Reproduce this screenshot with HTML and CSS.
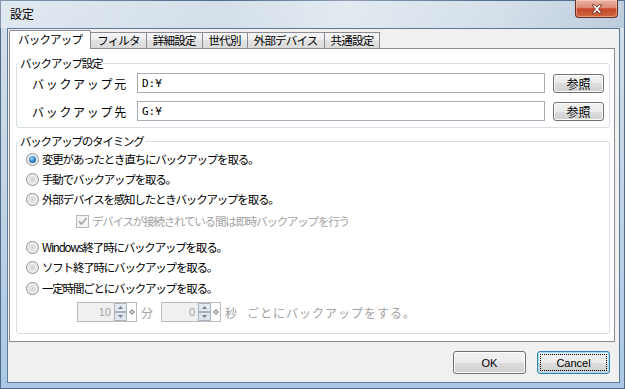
FILE: index.html
```html
<!DOCTYPE html>
<html lang="ja">

<head>
  <meta charset="UTF-8">
  <title>設定</title>
  <link rel="stylesheet" href="styles.css">
</head>

<body>
  <div class="window">
    <div class="titlebar">
      <span class="title">設定</span>
      <button class="close-btn" type="button">
        <svg width="14" height="10" viewBox="0 0 14 10">
          <path d="M2 0.8 L5.2 0.8 L7 3.2 L8.8 0.8 L12 0.8 L8.6 5 L12 9.2 L8.8 9.2 L7 6.8 L5.2 9.2 L2 9.2 L5.4 5 Z" fill="#fff" stroke="#5a1d12" stroke-width="0.8" />
        </svg>
      </button>
    </div>

    <div class="client">
      <div class="tabs">
        <div class="tab active">バックアップ</div>
        <div class="tab">フィルタ</div>
        <div class="tab">詳細設定</div>
        <div class="tab">世代別</div>
        <div class="tab">外部デバイス</div>
        <div class="tab">共通設定</div>
      </div>

      <div class="panel">
        <fieldset class="group">
          <legend>バックアップ設定</legend>
          <div class="path-rows">
            <div class="path-row">
              <label class="path-label">バックアップ元</label>
              <input class="path-input" type="text" value="D:¥">
              <button class="btn btn-browse" type="button">参照</button>
            </div>
            <div class="path-row">
              <label class="path-label">バックアップ先</label>
              <input class="path-input" type="text" value="G:¥">
              <button class="btn btn-browse" type="button">参照</button>
            </div>
          </div>
        </fieldset>

        <fieldset class="group group-timing">
          <legend>バックアップのタイミング</legend>
          <div class="options">
            <div class="option"><span class="radio checked"></span>変更があったとき直ちにバックアップを取る。</div>
            <div class="option"><span class="radio"></span>手動でバックアップを取る。</div>
            <div class="option"><span class="radio"></span>外部デバイスを感知したときバックアップを取る。</div>
            <div class="option option-sub">
              <span class="checkbox">
                <svg width="11" height="11" viewBox="0 0 11 11">
                  <path d="M2 5.5 L4.5 8 L9.5 2" fill="none" stroke="#a8a8a8" stroke-width="1.8" />
                </svg>
              </span>デバイスが接続されている間は即時バックアップを行う
            </div>
            <div class="option option-after-sub"><span class="radio"></span>Windows終了時にバックアップを取る。</div>
            <div class="option"><span class="radio"></span>ソフト終了時にバックアップを取る。</div>
            <div class="option option-tight"><span class="radio"></span>一定時間ごとにバックアップを取る。</div>
            <div class="spin-row">
              <div class="spin">
                <span class="spin-value">10</span>
                <span class="spin-arrows">
                  <svg width="13" height="18" viewBox="0 0 13 18">
                    <rect x="0.5" y="0.5" width="12" height="8" fill="#e4e9ee" stroke="#a9b3bd" />
                    <rect x="0.5" y="9.5" width="12" height="8" fill="#dfe5eb" stroke="#a9b3bd" />
                    <path d="M4 6 L6.5 3 L9 6 Z" fill="#6f8294" />
                    <path d="M4 12 L6.5 15 L9 12 Z" fill="#6f8294" />
                  </svg>
                </span>
                <span class="spin-mark"><i></i></span>
              </div>
              <span class="unit">分</span>
              <div class="spin spin-second">
                <span class="spin-value">0</span>
                <span class="spin-arrows">
                  <svg width="13" height="18" viewBox="0 0 13 18">
                    <rect x="0.5" y="0.5" width="12" height="8" fill="#e4e9ee" stroke="#a9b3bd" />
                    <rect x="0.5" y="9.5" width="12" height="8" fill="#dfe5eb" stroke="#a9b3bd" />
                    <path d="M4 6 L6.5 3 L9 6 Z" fill="#6f8294" />
                    <path d="M4 12 L6.5 15 L9 12 Z" fill="#6f8294" />
                  </svg>
                </span>
                <span class="spin-mark"><i></i></span>
              </div>
              <span class="unit">秒</span>
              <span class="spin-note">ごとにバックアップをする。</span>
            </div>
          </div>
        </fieldset>
      </div>

      <div class="footer">
        <button class="btn btn-dialog" type="button">OK</button>
        <button class="btn btn-dialog default" type="button">Cancel</button>
      </div>
    </div>
  </div>
</body>

</html>
```

FILE: styles.css
```css
* {
  box-sizing: border-box;
}

html,
body {
  margin: 0;
  padding: 0;
}

body {
  width: 625px;
  height: 389px;
  overflow: hidden;
  font-family: 'Noto Sans CJK JP', sans-serif;
  font-size: 11.5px;
  letter-spacing: -1.2px;
  color: #000;
}

/* Aero glass frame */
.window {
  height: 389px;
  display: flex;
  flex-direction: column;
  background: linear-gradient(to bottom, #d5e0ea 0%, #c8d7e6 35%, #aac8e6 100%);
  box-shadow: inset 0 0 0 1px #4f6b88;
}

.titlebar {
  height: 28px;
  display: flex;
  align-items: flex-start;
  background: linear-gradient(100deg, rgba(255, 255, 255, 0.3) 0%, rgba(255, 255, 255, 0) 35%,
      rgba(255, 255, 255, 0.35) 55%, rgba(255, 255, 255, 0) 80%, rgba(120, 150, 185, 0.25) 100%);
}

.title {
  padding: 7px 0 0 10px;
  font-size: 12px;
  line-height: 14px;
  letter-spacing: 0;
}

.close-btn {
  margin-left: auto;
  margin-right: 7px;
  width: 43px;
  height: 18px;
  padding: 0;
  border: 1px solid #6b2b22;
  border-top: none;
  border-radius: 0 0 4px 4px;
  background: linear-gradient(#ebb5a6 0%, #dc8a74 45%, #c5462a 52%, #d2673f 100%);
  box-shadow: inset 0 0 0 1px rgba(255, 220, 200, 0.45);
  display: flex;
  align-items: center;
  justify-content: center;
}

.client {
  flex: 1;
  margin: 0 5px 6px 7px;
  border: 1px solid #5d7a97;
  background: #f0f0f0;
  padding: 1px 4px 0 1px;
  display: flex;
  flex-direction: column;
}

/* tab strip */
.tabs {
  display: flex;
  align-items: flex-end;
  height: 18px;
}

.tab {
  height: 16px;
  padding: 0 6px;
  margin-left: -1px;
  border: 1px solid #898c95;
  border-bottom: none;
  background: linear-gradient(#f6f6f6, #ececec 50%, #e2e2e2 50%, #dadada);
  line-height: 14px;
  letter-spacing: -0.8px;
  white-space: nowrap;
}

.tab.active {
  height: 19px;
  margin-left: 0;
  margin-bottom: -1px;
  padding: 0 8px;
  background: #fff;
  border-radius: 2px 2px 0 0;
  line-height: 16px;
  position: relative;
  z-index: 1;
}

.panel {
  height: 294px;
  border: 1px solid #898c95;
  background: #fff;
  padding: 8px 4px 0 6px;
}

/* group boxes */
.group {
  margin: 0;
  padding: 0;
  min-width: 0;
  border: 1px solid #d5dfe5;
  border-radius: 3px;
}

.group legend {
  margin-left: 2px;
  padding: 0 1px;
  line-height: 12px;
}

.group-timing {
  margin-top: 7px;
}

.path-rows {
  display: flex;
  flex-direction: column;
  gap: 8px;
  padding: 4px 5px 6px 15px;
}

.path-row {
  display: flex;
  align-items: center;
  height: 20px;
}

.path-label {
  width: 105px;
  font-size: 12px;
  letter-spacing: 1.7px;
  white-space: nowrap;
}

.path-input {
  flex: 1;
  min-width: 0;
  height: 20px;
  padding: 0 4px;
  border: 1px solid #a9adb3;
  background: #fff;
  font-family: 'DejaVu Sans Mono', monospace;
  font-size: 11px;
  letter-spacing: 0;
  color: #000;
}

.btn {
  padding: 0;
  border: 1px solid #707070;
  border-radius: 3px;
  background: linear-gradient(#f2f2f2 0%, #ebebeb 50%, #dddddd 50%, #cfcfcf 100%);
  box-shadow: inset 0 0 0 1px #fcfcfc;
  color: #000;
  font-family: 'Noto Sans CJK JP', sans-serif;
  font-size: 12px;
  letter-spacing: 0;
}

.btn-browse {
  width: 51px;
  height: 19px;
  margin-left: 8px;
  line-height: 15px;
}

/* radio options */
.options {
  padding: 2px 0 11px 9px;
}

.option {
  display: flex;
  align-items: center;
  gap: 3px;
  height: 20px;
  white-space: nowrap;
}

.option-sub {
  margin-top: 2px;
  padding-left: 50px;
  color: #a3a3a3;
}

.option-after-sub {
  margin-top: 6px;
}

.option-tight {
  margin-top: 1px;
}

.radio {
  width: 13px;
  height: 13px;
  flex: none;
  border: 1px solid #8f9092;
  border-radius: 50%;
  background: radial-gradient(circle at 50% 50%, #cfd1d3 0%, #e6e7e8 45%, #fbfbfb 100%);
  display: flex;
  align-items: center;
  justify-content: center;
}

.radio.checked::after {
  content: "";
  width: 7px;
  height: 7px;
  border-radius: 50%;
  background: radial-gradient(circle at 40% 35%, #a9dcff 0%, #3a8ad0 45%, #133f6e 100%);
}

.checkbox {
  width: 13px;
  height: 13px;
  flex: none;
  border: 1px solid #b8b8b8;
  background: #f4f4f4;
  display: flex;
  align-items: center;
  justify-content: center;
}

/* interval spinners */
.spin-row {
  display: flex;
  align-items: center;
  height: 20px;
  margin-top: 4px;
  padding-left: 51px;
  color: #a3a3a3;
}

.spin {
  width: 60px;
  height: 20px;
  display: flex;
  border: 1px solid #bcbcbc;
  background: #fff;
}

.spin-second {
  margin-left: 8px;
}

.spin-value {
  flex: 1;
  padding-right: 3px;
  background: #f0f0f0;
  text-align: right;
  font-family: 'Liberation Sans', sans-serif;
  font-size: 11px;
  line-height: 18px;
  letter-spacing: 0;
}

.spin-arrows {
  display: flex;
}

.spin-mark {
  width: 9px;
  display: flex;
  align-items: center;
  justify-content: center;
}

.spin-mark i {
  width: 4px;
  height: 4px;
  border: 1px solid #6c6c6c;
  transform: rotate(45deg);
}

.unit {
  margin-left: 4px;
  font-size: 12px;
  letter-spacing: 0;
}

.spin-note {
  margin-left: 10px;
  font-size: 12px;
  letter-spacing: 1px;
}

/* dialog buttons */
.footer {
  flex: 1;
  display: flex;
  justify-content: flex-end;
  align-items: flex-start;
  gap: 11px;
  padding: 9px 5px 0 0;
}

.btn-dialog {
  width: 73px;
  height: 23px;
  font-family: 'Liberation Sans', sans-serif;
  font-size: 11px;
}

.btn-dialog.default {
  border-color: #3c7fb1;
  box-shadow: inset 0 0 0 1px #a7def7;
  outline: 1px dotted #000;
  outline-offset: -4px;
}
```
